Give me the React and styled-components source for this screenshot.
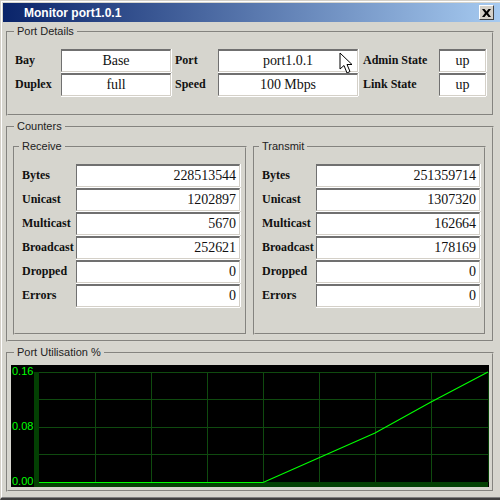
import React from "react";
import styled, { createGlobalStyle } from "styled-components";

const Global = createGlobalStyle`
  html, body { margin: 0; padding: 0; width: 500px; height: 500px; overflow: hidden; background: #d4d0c8; }
  * { box-sizing: border-box; }
`;

const Window = styled.div`
  width: 500px;
  height: 500px;
  background: #d6d5ce;
  display: flex;
  flex-direction: column;
  overflow: hidden;
  border-style: solid;
  border-width: 1px 0 2px 1px;
  border-color: #d4d0c8 transparent #404040 #d4d0c8;
  font-family: "Liberation Sans", Arial, sans-serif;
`;

const Inner = styled.div`
  flex: 1;
  display: flex;
  flex-direction: column;
  border-style: solid;
  border-width: 1px 0 1px 1px;
  border-color: #fff transparent #808080 #fff;
  padding: 1px 0 0 1px;
  min-height: 0;
`;

const TitleBar = styled.div`
  height: 19px;
  flex: none;
  display: flex;
  align-items: center;
  justify-content: space-between;
  padding: 0 6px 0 21px;
  background: linear-gradient(90deg, #0a246a, #a6caf0);
`;

const Title = styled.span`
  color: #fff;
  font: bold 12px "Liberation Sans", Arial, sans-serif;
`;

const CloseButton = styled.button`
  width: 15px;
  height: 15px;
  padding: 0;
  display: flex;
  align-items: center;
  justify-content: center;
  background: #d4d0c8;
  border-style: solid;
  border-width: 1px;
  border-color: #fff #404040 #404040 #fff;
`;

const Body = styled.div`
  flex: 1;
  display: flex;
  flex-direction: column;
  padding: 3px 6px 5px 3px;
  gap: 4px;
`;

const Group = styled.fieldset`
  margin: 0;
  min-width: 0;
  padding: 0;
  height: ${(p) => p.$h}px;
  flex: ${(p) => (p.$grow ? 1 : "none")};
  border: 2px groove #d8d7d0;
`;

const Legend = styled.legend`
  font: 11px "Liberation Sans", Arial, sans-serif;
  color: #222;
  margin-left: ${(p) => (p.$nested ? 4 : 6)}px;
  padding: 0 3px;
  line-height: 13px;
`;

const DetailsGrid = styled.div`
  display: grid;
  grid-template-columns: 46px 110px 47px 140px 81px 47px;
  grid-auto-rows: 23px;
  row-gap: 1px;
  margin-top: 11px;
  padding-left: 7px;
`;

const Label = styled.span`
  font: bold 12px "Liberation Serif", "Times New Roman", serif;
  color: #111;
  display: flex;
  align-items: center;
  padding-left: ${(p) => p.$indent || 0}px;
`;

const Field = styled.div`
  position: relative;
  background: #fff;
  border-style: solid;
  border-width: 2px 1px 1px 1px;
  border-color: #707070 #d4d0c8 #d4d0c8 #707070;
  box-shadow: 0 1px 0 #fff, 1px 0 0 #fff;
  display: flex;
  align-items: center;
  justify-content: ${(p) => (p.$right ? "flex-end" : "center")};
  padding-right: ${(p) => (p.$right ? "3px" : "0")};
  font: 14px "Liberation Serif", "Times New Roman", serif;
  color: #111;
  letter-spacing: -0.05px;
`;

const Cursor = styled.svg`
  position: absolute;
  left: 120px;
  top: 1px;
  width: 14px;
  height: 23px;
`;

const CounterColumns = styled.div`
  display: grid;
  grid-template-columns: 234px 233px;
  column-gap: 6px;
  padding-left: 5px;
  margin-top: 7px;
`;

const CounterGrid = styled.div`
  display: grid;
  grid-template-columns: 54px 164px;
  grid-auto-rows: 23px;
  row-gap: 1px;
  padding-left: 7px;
  margin-top: 11px;
`;

const Scope = styled.div`
  margin: 6px 0 0 3px;
  width: 478px;
  height: 122px;
  background: #000;
  line-height: 0;
`;

const receive = [
  ["Bytes", "228513544"],
  ["Unicast", "1202897"],
  ["Multicast", "5670"],
  ["Broadcast", "252621"],
  ["Dropped", "0"],
  ["Errors", "0"],
];
const transmit = [
  ["Bytes", "251359714"],
  ["Unicast", "1307320"],
  ["Multicast", "162664"],
  ["Broadcast", "178169"],
  ["Dropped", "0"],
  ["Errors", "0"],
];

function Counters({ title, rows }) {
  return (
    <Group $h={195}>
      <Legend $nested>{title}</Legend>
      <CounterGrid>
        {rows.map(([k, v]) => (
          <React.Fragment key={k}>
            <Label>{k}</Label>
            <Field $right>{v}</Field>
          </React.Fragment>
        ))}
      </CounterGrid>
    </Group>
  );
}

function Chart() {
  const vx = [95, 151, 207, 263, 319, 375, 431];
  const hy = [372, 399, 427, 454];
  const grid = "#0f4a0f";
  const axis = "#034003";
  const green = "#00ff00";
  return (
    <svg width="478" height="122" viewBox="11 365 478 122">
      <rect x="11" y="365" width="478" height="122" fill="#000" />
      {vx.map((x) => (
        <line key={x} x1={x + 0.5} x2={x + 0.5} y1="372" y2="482" stroke={grid} />
      ))}
      {hy.map((y) => (
        <line key={y} x1="39" x2="488" y1={y + 0.5} y2={y + 0.5} stroke={grid} />
      ))}
      <line x1="488.5" x2="488.5" y1="372" y2="482" stroke={axis} />
      <rect x="34" y="372" width="5" height="115" fill={axis} />
      <rect x="34" y="482" width="454" height="5" fill={axis} />
      <polyline points="263,482.5 375,433 431,402 488,372" fill="none" stroke={green} strokeWidth="1.1" />
      <rect x="39" y="482" width="224" height="1" fill={green} />
      <g fill={green} fontFamily="'Liberation Sans', Arial, sans-serif" fontSize="11">
        <text x="12" y="375">0.16</text>
        <text x="12" y="430">0.08</text>
        <text x="12" y="485">0.00</text>
      </g>
    </svg>
  );
}

export default function App() {
  return (
    <Window>
      <Global />
      <Inner>
        <TitleBar>
          <Title>Monitor port1.0.1</Title>
          <CloseButton aria-label="Close">
            <svg width="9" height="8" viewBox="0 0 9 8">
              <path d="M0 0h2.500l2 2.500L6.500 0H9L6 4l3 4H6.500l-2-2.500-2 2.500H0l3-4z" fill="#000" />
            </svg>
          </CloseButton>
        </TitleBar>
        <Body>
          <Group $h={91}>
            <Legend>Port Details</Legend>
            <DetailsGrid>
              <Label>Bay</Label>
              <Field>Base</Field>
              <Label $indent={4}>Port</Label>
              <Field>
                port1.0.1
                <Cursor viewBox="0 0 14 23">
                  <path d="M1 1v16l4-3.500L8 21l3-1.500L8 12.500h5z" fill="#fff" stroke="#000" strokeWidth="1" />
                </Cursor>
              </Field>
              <Label $indent={5}>Admin State</Label>
              <Field>up</Field>
              <Label>Duplex</Label>
              <Field>full</Field>
              <Label $indent={4}>Speed</Label>
              <Field>100 Mbps</Field>
              <Label $indent={5}>Link State</Label>
              <Field>up</Field>
            </DetailsGrid>
          </Group>
          <Group $h={222}>
            <Legend>Counters</Legend>
            <CounterColumns>
              <Counters title="Receive" rows={receive} />
              <Counters title="Transmit" rows={transmit} />
            </CounterColumns>
          </Group>
          <Group $grow>
            <Legend>Port Utilisation %</Legend>
            <Scope>
              <Chart />
            </Scope>
          </Group>
        </Body>
      </Inner>
    </Window>
  );
}
